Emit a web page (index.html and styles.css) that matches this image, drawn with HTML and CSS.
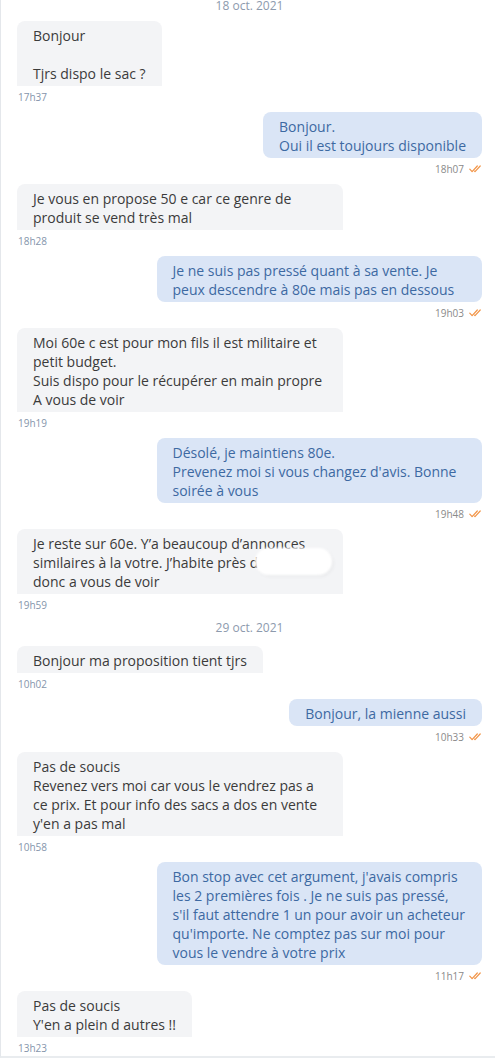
FILE: index.html
```html
<!DOCTYPE html>
<html lang="fr">
<head>
    <meta charset="UTF-8">
    <meta name="viewport" content="width=device-width, initial-scale=1.0">
    <title>Messages</title>
    <link rel="stylesheet" href="styles.css">
</head>
<body>
    <div class="chat">
      <div class="day first">18 oct. 2021</div>

      <div class="msg in">
        <div class="bubble">Bonjour

Tjrs dispo le sac ?</div>
        <div class="meta">17h37</div>
      </div>

      <div class="msg out">
        <div class="bubble">Bonjour.
Oui il est toujours disponible</div>
        <div class="meta"><span>18h07</span><svg class="check" viewBox="0 0 13 8"><path d="M0.8 4.2l2.3 2.4 5.2-5.6M5.6 6.2l0.4 0.4 5.2-5.6"/></svg></div>
      </div>

      <div class="msg in">
        <div class="bubble">Je vous en propose 50 e car ce genre de produit se vend très mal</div>
        <div class="meta">18h28</div>
      </div>

      <div class="msg out">
        <div class="bubble">Je ne suis pas pressé quant à sa vente. Je peux descendre à 80e mais pas en dessous</div>
        <div class="meta"><span>19h03</span><svg class="check" viewBox="0 0 13 8"><path d="M0.8 4.2l2.3 2.4 5.2-5.6M5.6 6.2l0.4 0.4 5.2-5.6"/></svg></div>
      </div>

      <div class="msg in">
        <div class="bubble">Moi 60e c est pour mon fils il est militaire et petit budget.
Suis dispo pour le récupérer en main propre
A vous de voir</div>
        <div class="meta">19h19</div>
      </div>

      <div class="msg out">
        <div class="bubble">Désolé, je maintiens 80e.
Prevenez moi si vous changez d'avis. Bonne soirée à vous</div>
        <div class="meta"><span>19h48</span><svg class="check" viewBox="0 0 13 8"><path d="M0.8 4.2l2.3 2.4 5.2-5.6M5.6 6.2l0.4 0.4 5.2-5.6"/></svg></div>
      </div>

      <div class="msg in">
        <div class="bubble">Je reste sur 60e. Y’a beaucoup d’annonces similaires à la votre. J’habite près d
donc a vous de voir<span class="mask"></span></div>
        <div class="meta">19h59</div>
      </div>

      <div class="day">29 oct. 2021</div>

      <div class="msg in">
        <div class="bubble">Bonjour ma proposition tient tjrs</div>
        <div class="meta">10h02</div>
      </div>

      <div class="msg out">
        <div class="bubble">Bonjour, la mienne aussi</div>
        <div class="meta"><span>10h33</span><svg class="check" viewBox="0 0 13 8"><path d="M0.8 4.2l2.3 2.4 5.2-5.6M5.6 6.2l0.4 0.4 5.2-5.6"/></svg></div>
      </div>

      <div class="msg in">
        <div class="bubble">Pas de soucis
Revenez vers moi car vous le vendrez pas a ce prix. Et pour info des sacs a dos en vente y'en a pas mal</div>
        <div class="meta">10h58</div>
      </div>

      <div class="msg out">
        <div class="bubble">Bon stop avec cet argument, j'avais compris les 2 premières fois . Je ne suis pas pressé, s'il faut attendre 1 un pour avoir un acheteur qu'importe. Ne comptez pas sur moi pour vous le vendre à votre prix</div>
        <div class="meta"><span>11h17</span><svg class="check" viewBox="0 0 13 8"><path d="M0.8 4.2l2.3 2.4 5.2-5.6M5.6 6.2l0.4 0.4 5.2-5.6"/></svg></div>
      </div>

      <div class="msg in">
        <div class="bubble">Pas de soucis
Y'en a plein d autres !!</div>
        <div class="meta">13h23</div>
      </div>
    </div>
</body>
</html>
```

FILE: styles.css
```css
* {
  margin: 0;
  padding: 0;
  box-sizing: border-box;
}
body {
  font-family: "Open Sans", Arial, sans-serif;
  background-color: #fff;
  overflow: hidden;
}
.chat {
  display: flex;
  flex-direction: column;
  padding: 0 13px 0 16px;
  border-left: 1px solid #e4e7eb;
  border-bottom: 2px solid #e9ecef;
}
.day {
  text-align: center;
  font-size: 12px;
  line-height: 16px;
  color: #8d9aad;
  margin-bottom: 10px;
}
.day.first {
  margin-top: -2px;
  margin-bottom: 7px;
}
.msg {
  display: flex;
  flex-direction: column;
  align-items: flex-start;
}
.msg.out {
  align-items: flex-end;
}
.bubble {
  position: relative;
  max-width: 70%;
  padding: 5px 16px 3px;
  font-size: 14px;
  line-height: 19px;
  white-space: pre-line;
}
.in .bubble {
  background-color: #f3f4f6;
  color: #3b3b3b;
  border-radius: 8px 8px 0 0;
}
.out .bubble {
  background-color: #dae5f6;
  color: #3d69a2;
  border-radius: 8px;
}
.meta {
  display: flex;
  align-items: center;
  gap: 5px;
  margin: 4px 0 8px;
  font-size: 10px;
  line-height: 14px;
}
.in .meta {
  padding-left: 1px;
  color: #8595ab;
}
.out .meta {
  color: #8a8a8a;
}
.msg:last-child .meta {
  margin-bottom: 1px;
}
.check {
  width: 13px;
  height: 8px;
  fill: none;
  stroke: #f29446;
  stroke-width: 1.2;
  stroke-linecap: round;
  stroke-linejoin: round;
}
.mask {
  position: absolute;
  left: 238px;
  top: 19px;
  width: 77px;
  height: 27px;
  background-color: #fff;
  border-radius: 14px;
  box-shadow: 2px 2px 3px rgba(0, 0, 0, 0.04);
  filter: blur(1px);
}
```
